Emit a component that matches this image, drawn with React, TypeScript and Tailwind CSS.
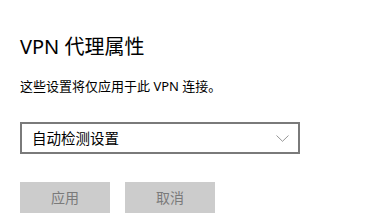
const FONT = { fontFamily: '"Segoe UI", "Noto Sans", "Noto Sans CJK SC", sans-serif' };

function Chevron() {
  return (
    <svg width="13" height="7" viewBox="0 0 13 7" fill="none" className="text-[#8a8a8a]">
      <path d="M0.5 0.5 L6.5 6.3 L12.5 0.5" stroke="currentColor" strokeWidth="0.9" />
    </svg>
  );
}

export default function App() {
  return (
    <div className="h-[223px] w-[366px] bg-white pl-5 pt-[33px] text-black" style={FONT}>
      <h1 className="text-[20px] leading-[28px]">VPN 代理属性</h1>
      <p className="mt-[16px] text-[13px] leading-[19px]">这些设置将仅应用于此 VPN 连接。</p>
      <div className="mt-[26px] flex h-[32px] w-[280px] items-center justify-between border-2 border-[#7a7a7a] pl-[10px] pr-[9px]">
        <span className="text-[14.5px] leading-[20px]">自动检测设置</span>
        <Chevron />
      </div>
      <div className="mt-[28px] flex gap-[15px]">
        <button className="h-[31px] w-[90px] bg-[#cccccc] text-[14px] text-[#7a7a7a]">应用</button>
        <button className="h-[31px] w-[90px] bg-[#cccccc] text-[14px] text-[#7a7a7a]">取消</button>
      </div>
    </div>
  );
}
